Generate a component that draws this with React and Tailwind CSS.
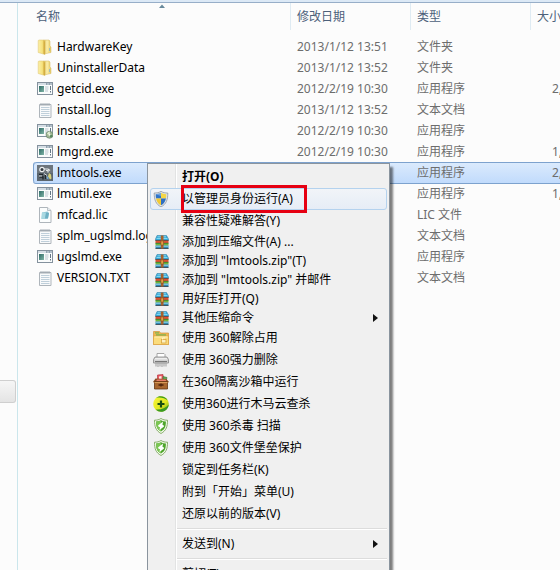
import React from "react";

const svgProps = { width: 16, height: 16, viewBox: "0 0 16 16", "aria-hidden": true, className: "block shrink-0" };

function FolderIcon() {
  return (
    <svg {...svgProps}>
      <defs>
        <linearGradient id="folderFront" x1="0" y1="0" x2="1" y2="0">
          <stop offset="0" stopColor="#fbeea6" />
          <stop offset=".6" stopColor="#f6e27e" />
          <stop offset="1" stopColor="#dcb748" />
        </linearGradient>
        <linearGradient id="folderBack" x1="0" y1="0" x2="1" y2="0">
          <stop offset="0" stopColor="#d8b244" />
          <stop offset=".5" stopColor="#fbefab" />
          <stop offset="1" stopColor="#e6c965" />
        </linearGradient>
      </defs>
      <path d="M6 1h6l1 1v5l1 1v5.500L7 15z" fill="url(#folderBack)" stroke="#d6bb62" strokeWidth=".5" />
      <path d="M1.200 1.500L2 1h3.500L8 2.200V15.500L1.200 13.500z" fill="url(#folderFront)" stroke="#dcc068" strokeWidth=".5" />
      <path d="M6.500 2l1.500.4V15.200L6.500 14.800z" fill="#cfa63a" opacity=".7" />
      <path d="M12.500 9v3" stroke="#8bb9c8" strokeWidth=".8" />
    </svg>
  );
}

function ExeIcon({ installer }) {
  return (
    <svg {...svgProps}>
      <defs>
        <linearGradient id="exePane" x1="0" y1="0" x2="1" y2="1">
          <stop offset="0" stopColor="#2f6b66" />
          <stop offset="1" stopColor="#7fb4a6" />
        </linearGradient>
      </defs>
      <rect x=".5" y="1.500" width="15" height="12" fill="#fafcfc" stroke="#84919d" />
      <path d="M1 2h14v2H1z" fill="#d5dee5" />
      <path d="M9 2.500h1.500v1H9zM11.500 2.500H13v1h-1.500zM13.500 2.500h1v1h-1z" fill="#51677b" />
      <rect x="2" y="5" width="5" height="6" fill="url(#exePane)" />
      <path d="M8 6h3.500M8 8h3.500M8 10h3" stroke="#b9c5cd" />
      <path d="M13.500 5v4M13.500 10v1.500" stroke="#667785" />
      {installer && (
        <g>
          <circle cx="12.500" cy="11.800" r="3.500" fill="#9fb591" stroke="#607c68" strokeWidth=".6" />
          <path d="M10 11a3 3 0 0 1 3-2.500l-.5 3z" fill="#e2efd3" />
          <path d="M12.500 11.500l3 1a3 3 0 0 1-2 2z" fill="#4c8255" />
          <circle cx="12.500" cy="11.800" r="1" fill="#f4f8ee" />
        </g>
      )}
    </svg>
  );
}

function TextIcon() {
  return (
    <svg {...svgProps}>
      <path d="M2.500 2.500h11.500v13H2.500z" fill="#f9fafb" stroke="#aeb5bb" />
      <path d="M4 5.500h8.500M4 7.500h8.500M4 9.500h8.500M4 11.500h8.500M4 13.500h8.500" stroke="#b8c9d6" strokeWidth=".9" />
      <path d="M4 1v3M6 1v3M8 1v3M10 1v3M12 1v3" stroke="#939da5" strokeWidth=".8" />
    </svg>
  );
}

function LicenseIcon() {
  return (
    <svg {...svgProps}>
      <path d="M2.500 .5h8l3.500 3v12H2.500z" fill="#fbfdfd" stroke="#aeb5bb" />
      <path d="M10.500 .5v3H14" fill="#e5ecf0" stroke="#aeb5bb" strokeWidth=".8" />
      <path d="M5 5.500l5.500-1 1.500 1.500-1 5.500-6.500.5z" fill="#8dc4d4" />
      <path d="M5 5.500l4 .3-1 5.700-3.500.5z" fill="#a9d9e2" />
      <path d="M9 5.800l3 .2-1 5.500H8z" fill="#6db0c4" />
    </svg>
  );
}

function ToolsIcon() {
  return (
    <svg {...svgProps}>
      <rect width="16" height="16" fill="#6d757c" />
      <path d="M0 8h16v8H0z" fill="#5c666e" />
      <circle cx="5" cy="4.500" r="2.200" fill="#343b42" stroke="#f0f2f2" strokeWidth="1.200" />
      <path d="M7 4h4l2 1.500M9 5.500h2v2" fill="none" stroke="#e8ebec" strokeWidth="1.200" />
      <path d="M2 9.500h4M2.500 12h3.500v2.500M8.500 10v4" fill="none" stroke="#22282e" strokeWidth="1.400" />
      <path d="M2 11h3M7 8.500l3 2" stroke="#d5dadd" />
      <path d="M12 8l2 1.500.5 4L13 14.500l-2-3z" fill="#d8d27c" />
      <path d="M9.500 11l2 1v2.500l-2-1z" fill="#78abd0" />
    </svg>
  );
}

function ShieldIcon() {
  return (
    <svg {...svgProps}>
      <defs>
        <clipPath id="uacShape">
          <path d="M8 1.800c1.800 1.100 3.500 1.400 5.300 1.400 0 5.500-1.300 8.900-5.300 11-4-2.100-5.300-5.500-5.300-11 1.800 0 3.500-.3 5.300-1.400z" />
        </clipPath>
      </defs>
      <path d="M8 .3c2 1.400 4.300 1.700 6.800 1.700 0 7-1.600 11.200-6.800 13.900C2.800 13.200 1.200 9 1.200 2 3.700 2 6 1.700 8 .3z" fill="#dfe4e8" stroke="#828d96" strokeWidth=".7" />
      <g clipPath="url(#uacShape)">
        <path d="M0 0h8v7.500H0z" fill="#2e74c9" />
        <path d="M8 0h8v7.500H8z" fill="#f5d646" />
        <path d="M0 7.500h8V16H0z" fill="#f1ca35" />
        <path d="M8 7.500h8V16H8z" fill="#2d6fc2" />
        <path d="M2 3l6-1.500V5z" fill="#8ab9ea" opacity=".7" />
      </g>
    </svg>
  );
}

function ArchiveIcon() {
  return (
    <svg {...svgProps}>
      <path d="M4 1.500h9.500l2 3.500v1.500h-13V5z" fill="#35a7d6" stroke="#2b7ba0" strokeWidth=".5" />
      <path d="M4.500 2.800h8.500M3.500 4.500h11" stroke="#8cdcf2" strokeWidth=".9" />
      <path d="M2.500 6.500h13v2.500h-13z" fill="#dd5233" />
      <path d="M2.500 6.500h13" stroke="#5b3a2e" strokeWidth=".7" />
      <path d="M2.500 9h13v2.500h-13z" fill="#74b83c" />
      <path d="M2.500 9.300h13" stroke="#2c6a2c" strokeWidth=".7" />
      <path d="M2.500 11.500h13v3h-13z" fill="#3089b4" />
      <path d="M2.500 12.500h13" stroke="#8cd0e6" strokeWidth=".8" />
      <path d="M2.500 14.500h13" stroke="#2c3a42" strokeWidth=".8" />
      <path d="M7.800 1.500h2.700v13H7.800z" fill="#a8612c" />
      <path d="M8 7h2.300v4H8z" fill="#f0a948" stroke="#7b451c" strokeWidth=".5" />
    </svg>
  );
}

function UnlockFolderIcon() {
  return (
    <svg {...svgProps}>
      <path d="M.5 1.500h6l1 1.500h8v11.500H.5z" fill="#efb650" stroke="#d1953a" strokeWidth=".7" />
      <path d="M2 2.800h4M3 5h10" stroke="#7fb553" strokeWidth="1.300" />
      <path d="M.5 6h15v8.500H.5z" fill="#fbdc7c" stroke="#dba243" strokeWidth=".7" />
      <path d="M1.500 7h13" stroke="#fff2b8" />
      <rect x="8.500" y="9.500" width="4.500" height="3.500" fill="#fbf0c4" stroke="#d9a540" strokeWidth=".8" />
      <path d="M9.500 9.500V8h2.500" fill="none" stroke="#fff6d5" strokeWidth=".9" />
    </svg>
  );
}

function ShredderIcon() {
  return (
    <svg {...svgProps}>
      <path d="M4 1.500h7l1 1V6H4z" fill="#fff" stroke="#929292" strokeWidth=".8" />
      <path d="M2 5h12l1.500 2.500V11H.5V7.500z" fill="#d2d2d2" stroke="#858585" strokeWidth=".8" />
      <path d="M2 6.800h12" stroke="#fafafa" />
      <path d="M2 9.500h12" stroke="#777" />
      <path d="M3 10.500v4M5 10.500v4.500M7 10.500v4M9 10.500v4.500M11 10.500v4M13 10.500v4" stroke="#9d9d9d" />
    </svg>
  );
}

function SandboxIcon() {
  return (
    <svg {...svgProps}>
      <path d="M4.500 1l5.500-.5.500 7h-6z" fill="#ec5a63" stroke="#ad2734" strokeWidth=".6" />
      <path d="M6 2.500L8.500 2v3L6 5.500z" fill="#ffe6e2" />
      <path d="M10 2.500l4 1-1 4h-3z" fill="#63a852" stroke="#346d31" strokeWidth=".6" />
      <path d="M0 8l2.500-3.500L13.500 5 16 8l-2 1H2z" fill="#8a4c23" />
      <path d="M4 5.500h8.500l1 2H3z" fill="#e67c68" />
      <path d="M1.500 7.500h13V15h-13z" fill="#a8662f" stroke="#633312" strokeWidth=".8" />
      <path d="M1.500 8.500h13" stroke="#d69a58" />
      <path d="M5.500 11h5M8 9.500v3" stroke="#4c220d" strokeWidth="1.300" />
    </svg>
  );
}

function CloudScanIcon() {
  return (
    <svg {...svgProps}>
      <defs>
        <linearGradient id="scanBall" x1="0" y1="0" x2="1" y2="1">
          <stop offset="0" stopColor="#f8f53a" />
          <stop offset=".6" stopColor="#e0e81f" />
          <stop offset="1" stopColor="#5ba51f" />
        </linearGradient>
      </defs>
      <circle cx="8" cy="8" r="7.800" fill="url(#scanBall)" />
      <path d="M3 2C6-.8 12-.3 14.800 4.500 11.500 1.800 7 1 3 2zM15.700 8.500c-.5 7-8.500 9.500-13 5 5 .5 10-1 13-5z" fill="#3a9a22" />
      <path d="M8 4.500v7M4.500 8h7" stroke="#174e12" strokeWidth="2.200" />
    </svg>
  );
}

function GreenShieldIcon() {
  return (
    <svg {...svgProps}>
      <path d="M8 .5c2 1.300 4 1.700 6.500 1.700 0 6.500-1.200 10.300-6.500 13.300C2.700 12.500 1.500 8.700 1.500 2.200 4 2.200 6 1.800 8 .5z" fill="#f4faec" stroke="#7ba65b" strokeWidth=".9" />
      <path d="M8 2.300c1.600.9 3.200 1.300 4.900 1.300 0 5-.9 7.700-4.900 10C4 11.300 3.100 8.600 3.100 3.600 4.800 3.600 6.400 3.200 8 2.300z" fill="#4fa52c" />
      <path d="M8 2.300v11.300C4 11.300 3.100 8.600 3.100 3.600 4.800 3.600 6.400 3.200 8 2.300z" fill="#7bc653" />
      <path d="M10 3.500L5 7.500c.3 1 1 1.500 2 1.500l-.5 3L11 8.500C11 7.500 10.500 7 9.500 7z" fill="#fff" />
    </svg>
  );
}

const files = [
  { name: "HardwareKey", date: "2013/1/12 13:51", type: "文件夹", size: "", icon: <FolderIcon /> },
  { name: "UninstallerData", date: "2013/1/12 13:52", type: "文件夹", size: "", icon: <FolderIcon /> },
  { name: "getcid.exe", date: "2012/2/19 10:30", type: "应用程序", size: "2,", icon: <ExeIcon /> },
  { name: "install.log", date: "2013/1/12 13:52", type: "文本文档", size: "", icon: <TextIcon /> },
  { name: "installs.exe", date: "2012/2/19 10:30", type: "应用程序", size: "", icon: <ExeIcon installer /> },
  { name: "lmgrd.exe", date: "2012/2/19 10:30", type: "应用程序", size: "1,", icon: <ExeIcon /> },
  { name: "lmtools.exe", date: "", type: "应用程序", size: "2,", icon: <ToolsIcon />, selected: true },
  { name: "lmutil.exe", date: "", type: "应用程序", size: "1,", icon: <ExeIcon /> },
  { name: "mfcad.lic", date: "", type: "LIC 文件", size: "", icon: <LicenseIcon /> },
  { name: "splm_ugslmd.log", date: "", type: "文本文档", size: "", icon: <TextIcon /> },
  { name: "ugslmd.exe", date: "", type: "应用程序", size: "", icon: <ExeIcon /> },
  { name: "VERSION.TXT", date: "", type: "文本文档", size: "", icon: <TextIcon /> },
];

const menu = [
  { label: "打开(O)", bold: true },
  { label: "以管理员身份运行(A)", icon: <ShieldIcon />, active: true },
  { label: "兼容性疑难解答(Y)" },
  { label: "添加到压缩文件(A) ...", icon: <ArchiveIcon />, compact: true },
  { label: '添加到 "lmtools.zip"(T)', icon: <ArchiveIcon />, compact: true },
  { label: '添加到 "lmtools.zip" 并邮件', icon: <ArchiveIcon />, compact: true },
  { label: "用好压打开(Q)", icon: <ArchiveIcon />, compact: true },
  { label: "其他压缩命令", icon: <ArchiveIcon />, compact: true, submenu: true },
  { label: "使用 360解除占用", icon: <UnlockFolderIcon /> },
  { label: "使用 360强力删除", icon: <ShredderIcon /> },
  { label: "在360隔离沙箱中运行", icon: <SandboxIcon /> },
  { label: "使用360进行木马云查杀", icon: <CloudScanIcon /> },
  { label: "使用 360杀毒 扫描", icon: <GreenShieldIcon /> },
  { label: "使用 360文件堡垒保护", icon: <GreenShieldIcon /> },
  { label: "锁定到任务栏(K)" },
  { label: "附到「开始」菜单(U)" },
  { label: "还原以前的版本(V)" },
  { separator: true },
  { label: "发送到(N)", submenu: true },
  { separator: true },
  { label: "剪切(T)" },
];

function HeaderCell({ children, first, sorted }) {
  return (
    <th scope="col" className="h-[33px] p-0 align-top font-normal">
      <div className={first ? "relative flex h-[27px] items-center pl-[3px]" : "flex h-[27px] items-center border-l border-[#dfebf3] pl-[6px]"}>
        <button type="button" className="text-[#4c607a]">{children}</button>
        {sorted && (
          <svg className="absolute top-[1px] left-1/2 -translate-x-1/2" width="9" height="4" viewBox="0 0 8 4" aria-hidden="true">
            <path d="M1 4l3-3.500L7 4z" fill="#68899c" />
          </svg>
        )}
      </div>
    </th>
  );
}

function FileRow({ file }) {
  const cell = file.selected
    ? "p-0 h-[21px] bg-linear-to-b from-[#dcebfd] to-[#c1dbfc] shadow-[inset_0_1px_#7da2ce,0_1px_#7da2ce]"
    : "p-0 h-[21px]";
  return (
    <tr aria-selected={file.selected ? true : undefined}>
      <td className={file.selected ? cell + " rounded-l-[3px] border-l border-[#7da2ce]" : cell}>
        <div className={file.selected ? "flex items-center gap-1 pl-[3px] text-black" : "flex items-center gap-1 pl-1 text-black"}>
          {file.icon}
          <span>{file.name}</span>
        </div>
      </td>
      <td className={cell + " pl-[7px]"}>{file.date}</td>
      <td className={cell + " pl-[7px]"}>{file.type}</td>
      <td className={cell + " pl-[22px]"}>{file.size}</td>
    </tr>
  );
}

function MenuItem({ item }) {
  if (item.separator) {
    return (
      <li role="separator" className="flex h-2 items-center pl-[27px]">
        <div className="h-[2px] w-full border-t border-[#dcdcdc] bg-white" />
      </li>
    );
  }
  return (
    <li role="none" className={item.compact ? "relative h-[19px]" : "relative h-[22px]"}>
      <button
        type="button"
        role="menuitem"
        className={
          "flex h-full w-full items-center rounded-[3px] border pr-2 pl-[2px] text-left text-black " +
          (item.active ? "border-[#b4d2ee] bg-linear-to-b from-[#f1f4f8] to-[#e6edf6] " : "border-transparent ") +
          (item.bold ? "font-bold" : "")
        }
      >
        <span className="flex w-[29px] shrink-0">{item.icon}</span>
        <span className="grow whitespace-nowrap">{item.label}</span>
        {item.submenu && (
          <svg width="5" height="8" viewBox="0 0 5 8" aria-hidden="true">
            <path d="M0 0l5 4-5 4z" fill="#111" />
          </svg>
        )}
      </button>
      {item.active && <span className="pointer-events-none absolute -top-[3px] left-[31px] h-7 w-[126px] border-3 border-[#e60012]" />}
    </li>
  );
}

export default function App() {
  return (
    <div className="relative flex h-screen flex-col overflow-hidden bg-[#fcfcfc] font-['Noto_Sans','Noto_Sans_CJK_SC',sans-serif] text-[12px] leading-4 text-[#6d6d6d]">
      <div className="h-[3px] shrink-0 border-b border-[#97aec8] bg-[#dce9f6]" />
      <div className="flex min-h-0 grow">
        <aside className="w-[18px] shrink-0 border-r border-[#cbe6ec] pt-[377px]">
          <button type="button" aria-label="导航窗格" className="block h-[23px] w-4 rounded-r-[3px] border border-l-0 border-[#cfcfcf] bg-linear-to-b from-[#f6f6f6] to-[#e4e4e4]" />
        </aside>
        <main className="min-w-0 grow overflow-hidden pl-[15px]">
          <table className="w-full min-w-[620px] table-fixed border-separate border-spacing-0 text-left whitespace-nowrap">
            <colgroup>
              <col className="w-[257px]" />
              <col className="w-[120px]" />
              <col className="w-[120px]" />
              <col />
            </colgroup>
            <thead>
              <tr>
                <HeaderCell first sorted>名称</HeaderCell>
                <HeaderCell>修改日期</HeaderCell>
                <HeaderCell>类型</HeaderCell>
                <HeaderCell>大小</HeaderCell>
              </tr>
            </thead>
            <tbody>
              {files.map((file) => (
                <FileRow key={file.name} file={file} />
              ))}
            </tbody>
          </table>
        </main>
      </div>
      <ul
        role="menu"
        className="absolute top-[163px] left-[147px] w-[243px] border border-[#8a949e] bg-[#f0f0f0] bg-[linear-gradient(90deg,transparent_27px,#e2e3e3_27px,#e2e3e3_28px,#fff_28px,#fff_29px,transparent_29px)] p-[2px] shadow-[3px_4px_2px_rgba(0,0,0,0.5)]"
      >
        {menu.map((item, index) => (
          <MenuItem key={index} item={item} />
        ))}
      </ul>
    </div>
  );
}
